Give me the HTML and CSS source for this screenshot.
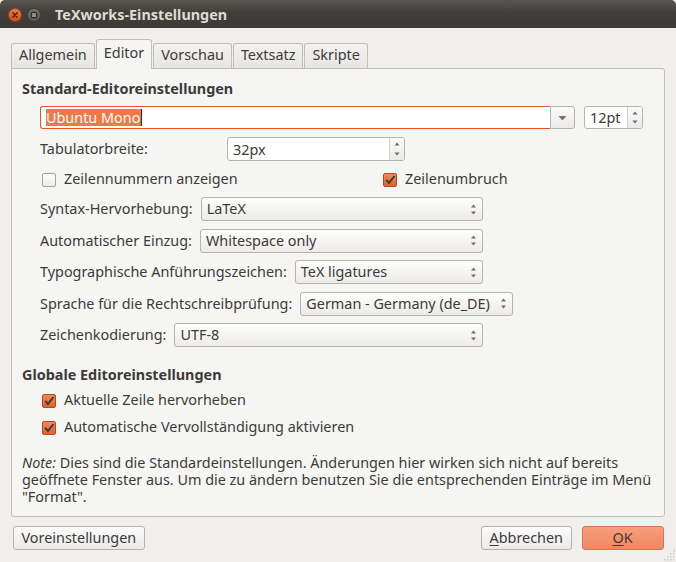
FILE: index.html
```html
<!DOCTYPE html>
<html lang="de">
<head>
<meta charset="utf-8">
<title>TeXworks-Einstellungen</title>
<link rel="stylesheet" href="styles.css">
</head>
<body>
<div class="window">
  <header class="titlebar">
    <div class="wm-buttons">
      <span class="wm">
        <svg width="14" height="14" viewBox="0 0 14 14">
          <defs>
            <linearGradient id="gClose" x1="0" y1="0" x2="0" y2="1">
              <stop offset="0" stop-color="#f47a4c"/>
              <stop offset="1" stop-color="#dc4a18"/>
            </linearGradient>
          </defs>
          <circle cx="7" cy="7" r="6.5" fill="url(#gClose)" stroke="#a83a12" stroke-width="0.8"/>
          <path d="M4.8 4.8 L9.2 9.2 M9.2 4.8 L4.8 9.2" stroke="#3a2a22" stroke-width="1.5" stroke-linecap="round"/>
        </svg>
      </span>
      <span class="wm">
        <svg width="14" height="14" viewBox="0 0 14 14">
          <defs>
            <linearGradient id="gMax" x1="0" y1="0" x2="0" y2="1">
              <stop offset="0" stop-color="#77756f"/>
              <stop offset="1" stop-color="#5a5853"/>
            </linearGradient>
          </defs>
          <circle cx="7" cy="7" r="6.5" fill="url(#gMax)" stroke="#36352f" stroke-width="0.8"/>
          <rect x="4.3" y="4.3" width="5.4" height="5.4" rx="1" fill="#8d8b85" stroke="#2f2e2a" stroke-width="1.2"/>
        </svg>
      </span>
    </div>
    <span class="title">TeXworks-Einstellungen</span>
  </header>

  <main class="content">
    <nav class="tabs">
      <span class="tab">Allgemein</span>
      <span class="tab tab-active">Editor</span>
      <span class="tab">Vorschau</span>
      <span class="tab">Textsatz</span>
      <span class="tab">Skripte</span>
    </nav>

    <section class="panel">
      <h2 class="heading">Standard-Editoreinstellungen</h2>

      <div class="fontrow">
        <div class="fontcombo">
          <div class="fc-edit"><span class="sel">Ubuntu Mono</span><span class="caret"></span></div>
          <div class="fc-btn">
            <svg width="9" height="6" viewBox="0 0 9 6"><path d="M0.5 1 L8.5 1 L4.5 5.5 Z" fill="#77756f"/></svg>
          </div>
        </div>
        <div class="spin spin-size">
          <span class="spin-val">12pt</span>
          <span class="spin-btns">
            <svg width="6" height="4" viewBox="0 0 6 4"><path d="M0.5 3.5 L3 0.5 L5.5 3.5 Z" fill="#6f6d68"/></svg>
            <svg width="6" height="4" viewBox="0 0 6 4"><path d="M0.5 0.5 L5.5 0.5 L3 3.5 Z" fill="#6f6d68"/></svg>
          </span>
        </div>
      </div>

      <div class="tabrow">
        <span class="label tab-label">Tabulatorbreite:</span>
        <div class="spin spin-tab">
          <span class="spin-val">32px</span>
          <span class="spin-btns">
            <svg width="6" height="4" viewBox="0 0 6 4"><path d="M0.5 3.5 L3 0.5 L5.5 3.5 Z" fill="#6f6d68"/></svg>
            <svg width="6" height="4" viewBox="0 0 6 4"><path d="M0.5 0.5 L5.5 0.5 L3 3.5 Z" fill="#6f6d68"/></svg>
          </span>
        </div>
      </div>

      <div class="checkrow">
        <label class="check check-wide">
          <span class="box box-off"></span>
          <span>Zeilennummern anzeigen</span>
        </label>
        <label class="check">
          <span class="box box-on"><svg width="14" height="14" viewBox="0 0 14 14"><path d="M3.2 6.8 L6 10 L11.5 3" fill="none" stroke="#3c3b37" stroke-width="2"/></svg></span>
          <span>Zeilenumbruch</span>
        </label>
      </div>

      <div class="form">
        <div class="frow">
          <span class="label">Syntax-Hervorhebung:</span>
          <div class="combo"><span class="combo-val">LaTeX</span><span class="updown"><svg width="7" height="13" viewBox="0 0 7 13"><path d="M1 4.5 L3.5 1.5 L6 4.5 Z M1 8.5 L6 8.5 L3.5 11.5 Z" fill="#6f6d68"/></svg></span></div>
        </div>
        <div class="frow">
          <span class="label">Automatischer Einzug:</span>
          <div class="combo"><span class="combo-val">Whitespace only</span><span class="updown"><svg width="7" height="13" viewBox="0 0 7 13"><path d="M1 4.5 L3.5 1.5 L6 4.5 Z M1 8.5 L6 8.5 L3.5 11.5 Z" fill="#6f6d68"/></svg></span></div>
        </div>
        <div class="frow">
          <span class="label">Typographische Anführungszeichen:</span>
          <div class="combo"><span class="combo-val">TeX ligatures</span><span class="updown"><svg width="7" height="13" viewBox="0 0 7 13"><path d="M1 4.5 L3.5 1.5 L6 4.5 Z M1 8.5 L6 8.5 L3.5 11.5 Z" fill="#6f6d68"/></svg></span></div>
        </div>
        <div class="frow">
          <span class="label">Sprache für die Rechtschreibprüfung:</span>
          <div class="combo"><span class="combo-val">German - Germany (de_DE)</span><span class="updown"><svg width="7" height="13" viewBox="0 0 7 13"><path d="M1 4.5 L3.5 1.5 L6 4.5 Z M1 8.5 L6 8.5 L3.5 11.5 Z" fill="#6f6d68"/></svg></span></div>
        </div>
        <div class="frow">
          <span class="label">Zeichenkodierung:</span>
          <div class="combo"><span class="combo-val">UTF-8</span><span class="updown"><svg width="7" height="13" viewBox="0 0 7 13"><path d="M1 4.5 L3.5 1.5 L6 4.5 Z M1 8.5 L6 8.5 L3.5 11.5 Z" fill="#6f6d68"/></svg></span></div>
        </div>
      </div>

      <h2 class="heading heading-global">Globale Editoreinstellungen</h2>

      <label class="check check-line check-first">
        <span class="box box-on"><svg width="14" height="14" viewBox="0 0 14 14"><path d="M3.2 6.8 L6 10 L11.5 3" fill="none" stroke="#3c3b37" stroke-width="2"/></svg></span>
        <span>Aktuelle Zeile hervorheben</span>
      </label>
      <label class="check check-line check-second">
        <span class="box box-on"><svg width="14" height="14" viewBox="0 0 14 14"><path d="M3.2 6.8 L6 10 L11.5 3" fill="none" stroke="#3c3b37" stroke-width="2"/></svg></span>
        <span>Automatische Vervollständigung aktivieren</span>
      </label>

      <p class="note"><em>Note:</em> Dies sind die Standardeinstellungen. Änderungen hier wirken sich nicht auf bereits<br>geöffnete Fenster aus. Um die zu ändern benutzen Sie die entsprechenden Einträge im Menü<br>"Format".</p>
    </section>

    <footer class="buttons">
      <button class="btn">Voreinstellungen</button>
      <span class="spacer"></span>
      <button class="btn btn-cancel"><u>A</u>bbrechen</button>
      <button class="btn btn-ok"><u>O</u>K</button>
    </footer>
  </main>

  <span class="grip">
    <svg width="14" height="14" viewBox="0 0 14 14">
      <g fill="#cfccc7">
        <rect x="11" y="2" width="1.5" height="1.5"/>
        <rect x="8" y="5" width="1.5" height="1.5"/><rect x="11" y="5" width="1.5" height="1.5"/>
        <rect x="5" y="8" width="1.5" height="1.5"/><rect x="8" y="8" width="1.5" height="1.5"/><rect x="11" y="8" width="1.5" height="1.5"/>
        <rect x="2" y="11" width="1.5" height="1.5"/><rect x="5" y="11" width="1.5" height="1.5"/><rect x="8" y="11" width="1.5" height="1.5"/><rect x="11" y="11" width="1.5" height="1.5"/>
      </g>
    </svg>
  </span>
</div>
</body>
</html>
```
FILE: styles.css
```css
html {
  background: #f0efee;
}
body {
  margin: 0;
  font-family: "Noto Sans", "Open Sans", sans-serif;
  font-size: 14.4px;
  color: #3c3b37;
}
.window {
  position: relative;
  width: 676px;
  height: 562px;
  display: flex;
  flex-direction: column;
  background: #f0efee;
  overflow: hidden;
}

/* title bar */
.titlebar {
  height: 28px;
  flex: 0 0 28px;
  display: flex;
  align-items: center;
  background: linear-gradient(#57554f, #413f3b 45%, #3c3b37);
  border-radius: 5px 5px 0 0;
  box-sizing: border-box;
  padding-top: 2px;
}
.wm-buttons {
  display: flex;
  gap: 5px;
  margin-left: 8px;
}
.wm {
  display: flex;
  width: 14px;
  height: 14px;
}
.title {
  margin-left: 14px;
  font-weight: 700;
  color: #dfdbd2;
  line-height: 20px;
}

/* content */
.content {
  flex: 1;
  display: flex;
  flex-direction: column;
  padding-top: 11px;
  padding-bottom: 12.5px;
}
.tabs {
  display: flex;
  align-items: flex-end;
  gap: 1px;
  margin-left: 11px;
  height: 29px;
}
.tab {
  box-sizing: border-box;
  border: 1px solid #c2bfba;
  border-bottom: none;
  border-radius: 3px 3px 0 0;
  padding: 0 7px 3px;
  line-height: 21px;
  height: 25px;
  background: linear-gradient(#f3f2f1, #e7e5e2);
  white-space: nowrap;
}
.tab-active {
  position: relative;
  z-index: 1;
  height: 30px;
  padding-top: 2px;
  padding-bottom: 6px;
  margin-bottom: -1px;
  background: #f5f5f4;
}

.panel {
  flex: 1;
  margin: 0 11px;
  border: 1px solid #c2bfba;
  border-radius: 0 3px 3px 3px;
  background: #f5f5f4;
  padding-top: 9.5px;
  display: flex;
  flex-direction: column;
  align-items: flex-start;
}
.heading {
  margin: 0 0 0 10px;
  font-size: 14.4px;
  font-weight: 700;
  line-height: 20px;
}
.heading-global {
  margin-top: 17.5px;
}
.label {
  line-height: 20px;
  white-space: nowrap;
}

/* font row */
.fontrow {
  display: flex;
  gap: 9px;
  margin: 7.5px 0 0 28px;
  height: 23px;
}
.fontcombo {
  display: flex;
  width: 535px;
}
.fc-edit {
  flex: 1;
  box-sizing: border-box;
  border: 1px solid #e95420;
  border-right: none;
  border-radius: 3px 0 0 3px;
  background: #ffffff;
  display: flex;
  align-items: center;
  padding-left: 4.5px;
}
.sel {
  background: #f07746;
  color: #ffffff;
  line-height: 17px;
  padding: 0 0.5px;
}
.caret {
  width: 1px;
  height: 17px;
  background: #2d2c29;
}
.fc-btn {
  width: 25px;
  box-sizing: border-box;
  border: 1px solid #b6b3ae;
  border-radius: 0 3px 3px 0;
  background: linear-gradient(#fbfbfb, #ebeae8);
  display: flex;
  align-items: center;
  justify-content: center;
}

/* spin boxes */
.spin {
  display: flex;
  box-sizing: border-box;
  border: 1px solid #b6b3ae;
  border-radius: 3px;
  background: #ffffff;
  overflow: hidden;
}
.spin-size {
  width: 59px;
  height: 23px;
}
.spin-tab {
  width: 178px;
  height: 24px;
}
.spin-val {
  flex: 1;
  padding-left: 5px;
  line-height: 21px;
  align-self: center;
}
.spin-btns {
  width: 15px;
  border-left: 1px solid #d3d0cb;
  background: linear-gradient(#fbfbfb, #ebeae8);
  display: flex;
  flex-direction: column;
  justify-content: space-between;
  align-items: center;
  padding: 4px 0 4px;
  box-sizing: border-box;
}

.tabrow {
  display: flex;
  align-items: center;
  margin: 8px 0 0 28px;
  height: 24px;
}
.tab-label {
  width: 187px;
}

/* checkboxes */
.checkrow {
  display: flex;
  margin: 7.5px 0 0 30px;
  height: 20px;
}
.check {
  display: flex;
  align-items: center;
  gap: 8px;
  line-height: 20px;
  white-space: nowrap;
}
.check-wide {
  width: 341px;
}
.check-line {
  margin-left: 30px;
  height: 20px;
}
.check-first {
  margin-top: 5px;
}
.check-second {
  margin-top: 7.5px;
}
.box {
  flex: 0 0 14px;
  width: 14px;
  height: 14px;
  box-sizing: border-box;
  border-radius: 2px;
  margin-top: 2px;
  display: flex;
}
.box-off {
  border: 1px solid #a7a49f;
  background: linear-gradient(#fdfdfd, #ecebe9);
}
.box-on {
  border: 1px solid #b04a1c;
  background: linear-gradient(#f4875b, #e1612e);
}
.box-on svg {
  margin: -1px;
}

/* form rows */
.form {
  display: flex;
  flex-direction: column;
  gap: 7.5px;
  margin: 8.5px 0 0 28px;
  width: 443px;
}
.frow {
  display: flex;
  align-items: center;
  gap: 8px;
  height: 24px;
}
.combo {
  flex: 1 1 auto;
  display: flex;
  align-items: center;
  height: 24px;
  box-sizing: border-box;
  border: 1px solid #b6b3ae;
  border-radius: 3px;
  background: linear-gradient(#fdfdfd, #ecebe9);
  padding-left: 5px;
  white-space: nowrap;
}
.combo-val {
  flex: 1;
  line-height: 20px;
}
.updown {
  display: flex;
  width: 7px;
  margin: 0 5px 0 10px;
}

/* note */
.note {
  margin: 17px 0 0 10px;
  line-height: 17px;
  white-space: nowrap;
}
.note em {
  font-style: italic;
}

/* buttons */
.buttons {
  display: flex;
  margin: 8.5px 12.5px 0 12.5px;
  height: 24px;
  gap: 9.5px;
}
.spacer {
  flex: 1;
}
.btn {
  font: inherit;
  color: #3c3b37;
  height: 24px;
  padding: 0 8px;
  border: 1px solid #b6b3ae;
  border-radius: 3px;
  background: linear-gradient(#fbfbfb, #ebeae8);
  line-height: 20px;
}
.btn-cancel {
  min-width: 90px;
}
.btn-ok {
  min-width: 82px;
  border-color: #d9744f;
  background: linear-gradient(#f89d7e, #f08760);
}
.btn u {
  text-underline-offset: 2px;
}

.grip {
  position: absolute;
  right: 0;
  bottom: 0;
  display: flex;
}
```
